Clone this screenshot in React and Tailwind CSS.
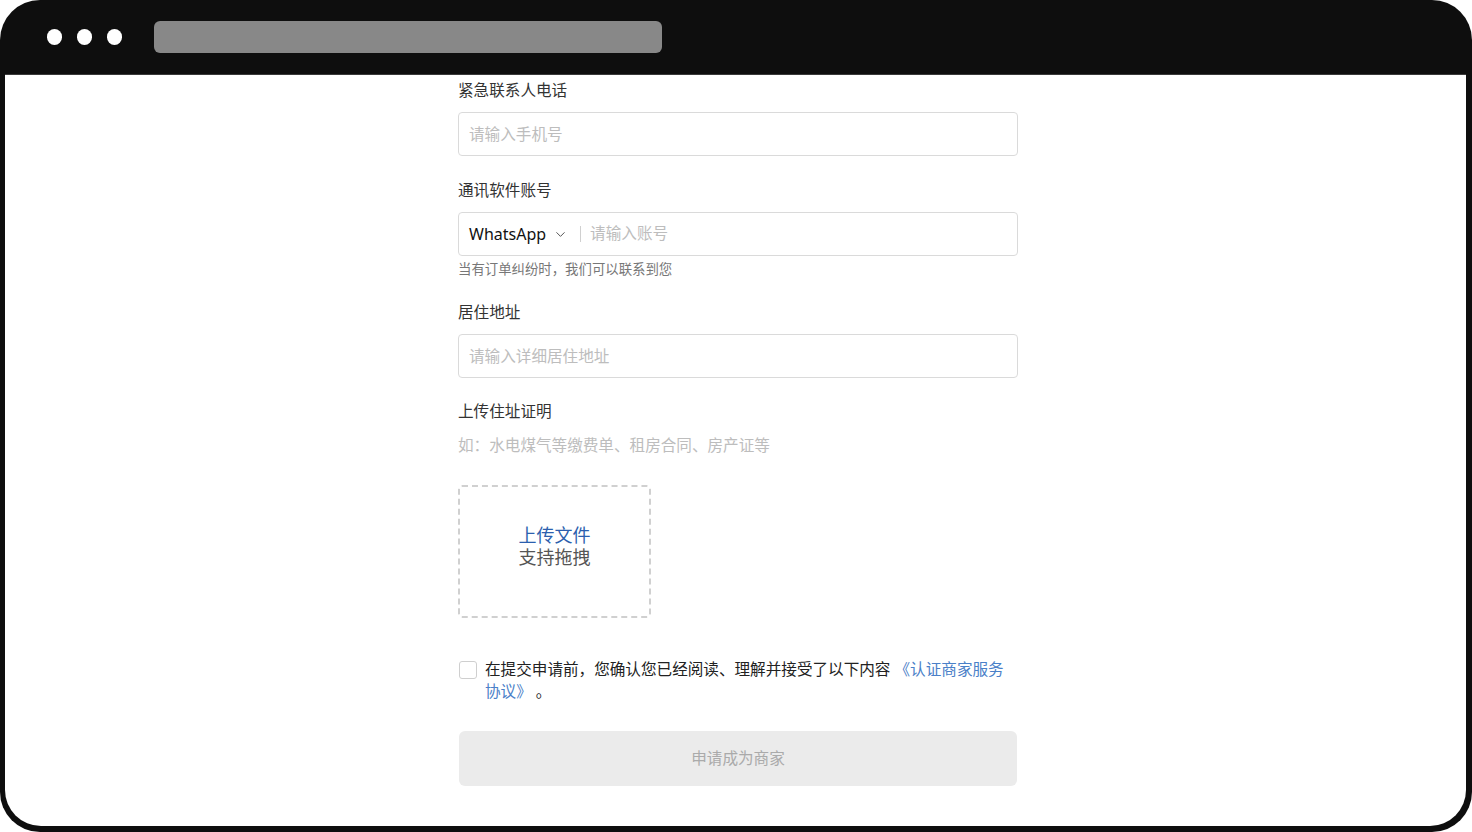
import { ChevronDown } from "lucide-react";

const Field = ({ label, children, className = "" }) => (
  <div className={className}>
    <div className="text-[15.6px] leading-6 text-[#333]">{label}</div>
    {children}
  </div>
);

const TextInput = ({ placeholder }) => (
  <input
    placeholder={placeholder}
    className="mt-[10px] h-[44px] w-full rounded-[4px] border border-[#dadada] bg-white px-[10px] text-[15.6px] text-[#222] outline-none placeholder:text-[#bdbdbd]"
  />
);

const App = () => {
  return (
    <div className="h-[832px] w-full bg-white font-['Noto_Sans','Noto_Sans_CJK_SC',sans-serif]">
      <div className="flex h-full flex-col rounded-[40px] bg-[#0e0e0e]">
        {/* window bar */}
        <div className="flex h-[74px] shrink-0 items-center pl-[47px]">
          <div className="flex gap-[15px]">
            <span className="h-[16px] w-[15px] rounded-full bg-white" />
            <span className="h-[16px] w-[15px] rounded-full bg-white" />
            <span className="h-[16px] w-[15px] rounded-full bg-white" />
          </div>
          <div className="ml-[32px] h-[32px] w-[508px] rounded-[6px] bg-[#888888]" />
        </div>

        {/* page */}
        <div className="mb-[6px] ml-[5px] mr-[6px] flex-1 overflow-hidden rounded-b-[36px] border-t border-[#3a3a3a] bg-white pl-[5px]">
          <form className="mx-auto w-[560px] pt-[3px]" onSubmit={(e) => e.preventDefault()}>
            <Field label="紧急联系人电话">
              <TextInput placeholder="请输入手机号" />
            </Field>

            <Field label="通讯软件账号" className="mt-[22px]">
              <div className="mt-[10px] flex h-[44px] w-full items-center rounded-[4px] border border-[#dadada] bg-white pl-[10px]">
                <span className="text-[16px] text-[#111]">WhatsApp</span>
                <ChevronDown size={15} strokeWidth={1.6} className="ml-[7px] text-[#555]" />
                <span className="ml-[12px] h-[16px] w-px bg-[#d0d0d0]" />
                <input
                  placeholder="请输入账号"
                  className="ml-[9px] flex-1 bg-transparent text-[15.6px] text-[#222] outline-none placeholder:text-[#bdbdbd]"
                />
              </div>
              <div className="mt-[3px] text-[13.4px] leading-5 text-[#777]">当有订单纠纷时，我们可以联系到您</div>
            </Field>

            <Field label="居住地址" className="mt-[21px]">
              <TextInput placeholder="请输入详细居住地址" />
            </Field>

            <Field label="上传住址证明" className="mt-[21px]">
              <div className="mt-[10px] text-[15.6px] leading-6 text-[#bdbdbd]">如：水电煤气等缴费单、租房合同、房产证等</div>
            </Field>

            <div className="mt-[28px] flex h-[133px] w-[193px] flex-col items-center justify-center rounded-[4px] border-2 border-dashed border-[#d0d0d0] pb-[12px]">
              <span className="text-[18px] leading-[22px] text-[#2c5fae]">上传文件</span>
              <span className="text-[18px] leading-[22px] text-[#555]">支持拖拽</span>
            </div>

            <div className="mt-[40px] flex items-start">
              <span className="ml-px mt-[3px] h-[18px] w-[18px] shrink-0 rounded-[3px] border border-[#cfcfcf]" />
              <p className="ml-[8px] text-[15.6px] leading-[22px] text-[#222]">
                在提交申请前，您确认您已经阅读、理解并接受了以下内容 <span className="text-[#4a80c8]">《认证商家服务协议》</span> 。
              </p>
            </div>

            <button
              type="submit"
              className="ml-px mt-[29px] h-[55px] w-[558px] rounded-[6px] bg-[#ebebeb] text-[15.6px] text-[#aaa]"
            >
              申请成为商家
            </button>
          </form>
        </div>
      </div>
    </div>
  );
};

export default App;
